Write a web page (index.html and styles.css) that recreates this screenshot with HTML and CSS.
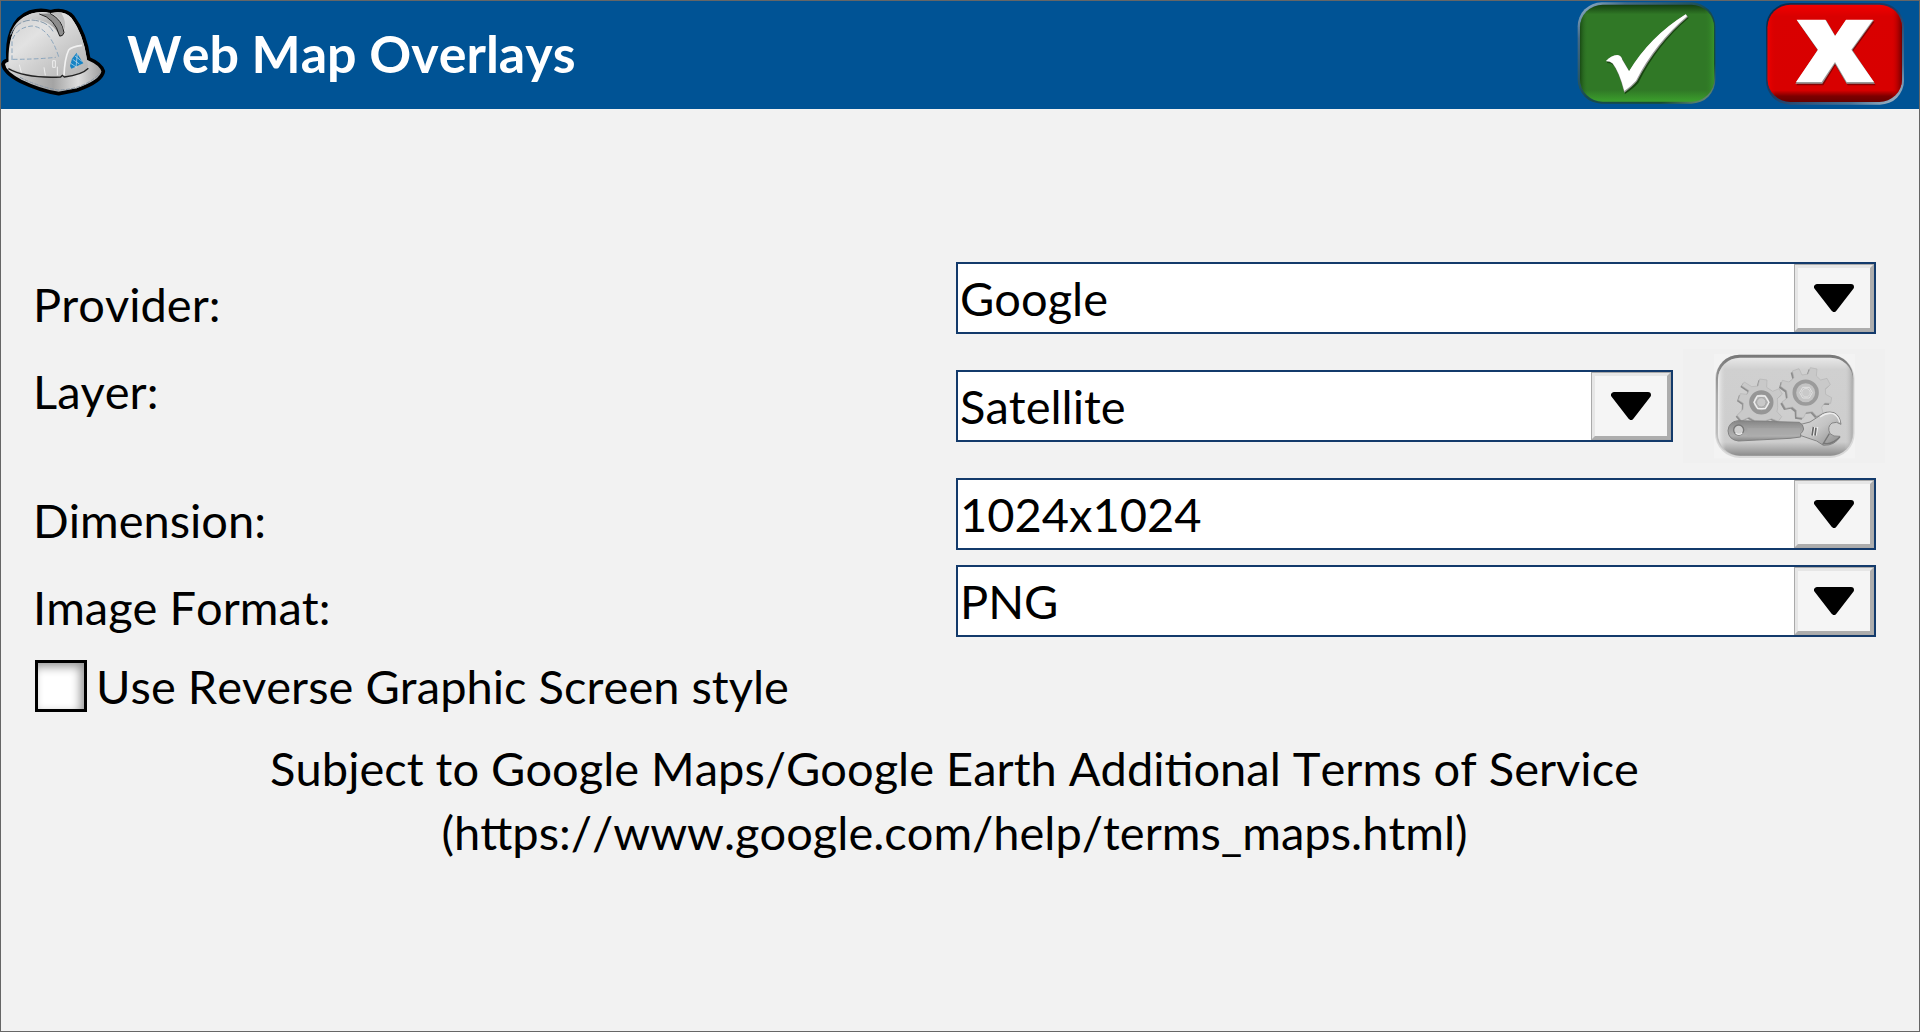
FILE: index.html
```html
<!DOCTYPE html>
<html lang="en">
<head>
<meta charset="utf-8">
<title>Web Map Overlays</title>
<link rel="stylesheet" href="styles.css">
</head>
<body>
<form class="dialog">
  <header class="header">
    <svg class="helmet" viewBox="0 3 360 324" aria-hidden="true">
      <defs>
        <linearGradient id="shell" x1="0" y1="0" x2="1" y2="1">
          <stop offset="0" stop-color="#cfcfcf"/><stop offset=".35" stop-color="#e2e2e2"/><stop offset=".7" stop-color="#c6c6c6"/><stop offset="1" stop-color="#b2b2b2"/>
        </linearGradient>
        <linearGradient id="brim" x1="0" y1="0" x2="1" y2="0">
          <stop offset="0" stop-color="#d8d8d8"/><stop offset=".5" stop-color="#a4a4a4"/><stop offset=".75" stop-color="#dedede"/><stop offset="1" stop-color="#9a9a9a"/>
        </linearGradient>
        <linearGradient id="ridge" x1="0" y1="0" x2="1" y2="1">
          <stop offset="0" stop-color="#e4e4e4"/><stop offset=".6" stop-color="#b5b5b5"/><stop offset="1" stop-color="#555"/>
        </linearGradient>
      </defs>
      <path d="M24 180C20 120 34 56 90 36Q122 26 152 35Q194 24 218 50Q256 100 266 176Q304 192 310 214Q306 244 232 270L176 281Q120 272 62 244Q12 218 9 192Q12 182 24 180Z" fill="url(#brim)" stroke="#000" stroke-width="11" stroke-linejoin="round"/>
      <path d="M27 202C20 125 42 60 94 41Q124 32 152 39Q192 31 214 53Q252 104 264 198Q250 226 190 230Q90 236 27 202Z" fill="url(#shell)"/>
      <path d="M28 112Q46 62 94 56Q160 62 180 110L192 100Q186 58 138 42Q112 35 90 43Q44 58 28 112Z" fill="url(#ridge)"/>
      <path d="M118 42Q164 54 179 108Q188 110 192 98Q188 60 150 40" fill="#8d8d8d" stroke="#222" stroke-width="3"/>
      <path d="M152 39Q186 54 192 90Q202 70 184 38Z" fill="#bdbdbd"/>
      <path d="M32 104Q50 62 96 60Q144 64 160 96" fill="none" stroke="#8498aa" stroke-width="3" stroke-dasharray="22 5"/>
      <path d="M36 180V122Q50 82 96 78Q148 82 176 170M38 178Q110 178 168 172" fill="none" stroke="#8ca6bd" stroke-width="3" stroke-dasharray="14 7"/>
      <path d="M25 206Q78 236 182 231L187 226L193 231Q246 225 265 205" fill="none" stroke="#222" stroke-width="4"/>
      <path d="M60 232Q110 258 172 270Q250 270 300 220" fill="none" stroke="#8a98a6" stroke-width="3" stroke-dasharray="12 4"/>
      <path d="M192 226Q194 176 206 150Q214 140 246 136" fill="none" stroke="#f2f2f2" stroke-width="5"/>
      <path d="M58 194L64 218M132 202L136 226M158 182H166V202H158ZM172 200V226" fill="none" stroke="#eee" stroke-width="3"/>
      <path d="M230 158L250 190L214 206L210 198L216 176Z" fill="#1683c4"/>
      <path d="M218 178L238 192M212 190L230 202M225 168L246 184M232 160L228 203" stroke="#d5e2ec" stroke-width="2"/>
    </svg>
    <h1 class="title">Web Map Overlays</h1>
    <button class="head-button" type="submit" aria-label="Accept">
      <svg viewBox="45 3 426 324" aria-hidden="true">
        <defs>
          <linearGradient id="okEdge" x1="0" y1="0" x2="1" y2="1">
            <stop offset="0" stop-color="#9dbbd2"/><stop offset=".18" stop-color="#446986"/><stop offset=".5" stop-color="#174b52"/><stop offset=".8" stop-color="#194c31"/><stop offset="1" stop-color="#7d9c8a"/>
          </linearGradient>
          <linearGradient id="okBody" x1="0" y1="0" x2="0" y2="1">
            <stop offset="0" stop-color="#143e10"/><stop offset=".1" stop-color="#307826"/><stop offset=".88" stop-color="#307826"/><stop offset="1" stop-color="#3ca02c"/>
          </linearGradient>
          <linearGradient id="okSide" x1="0" y1="0" x2="1" y2="0">
            <stop offset="0" stop-color="#194b14"/><stop offset=".06" stop-color="#307826" stop-opacity="0"/><stop offset=".93" stop-color="#307826" stop-opacity="0"/><stop offset="1" stop-color="#389429"/>
          </linearGradient>
        </defs>
        <rect x="53" y="7" width="413" height="304" rx="72" fill="url(#okEdge)"/>
        <rect x="60" y="14" width="402" height="291" rx="68" fill="url(#okBody)"/>
        <rect x="60" y="14" width="402" height="291" rx="68" fill="url(#okSide)"/>
        <path d="M141 187Q156 170 174 169Q187 171 190 185L210 218Q270 115 379 47L386 54Q290 136 235 249Q222 264 195 282Q180 222 161 196Q152 188 141 189Z" fill="#17450f"/>
        <path d="M138 184Q153 166 172 165Q184 167 188 180L208 214Q270 110 378 43L384 51Q290 130 231 244Q218 260 193 278Q178 218 158 191Q150 184 138 184Z" fill="#999"/>
        <path d="M138 183Q153 166 172 165Q184 167 187 180L207 214Q270 110 377 43L381 49Q285 130 228 242Q215 257 193 273Q178 215 158 190Q150 183 138 183Z" fill="#fff"/>
      </svg>
    </button>
    <button class="head-button" type="button" aria-label="Cancel">
      <svg viewBox="612 3 426 324" aria-hidden="true">
        <defs>
          <linearGradient id="noEdge" x1="0" y1="0" x2="1" y2="1">
            <stop offset="0" stop-color="#08294a"/><stop offset=".5" stop-color="#1e3d66"/><stop offset=".8" stop-color="#4a7194"/><stop offset="1" stop-color="#b5c5d2"/>
          </linearGradient>
          <linearGradient id="noBody" x1="0" y1="0" x2="0" y2="1">
            <stop offset="0" stop-color="#f20000"/><stop offset=".12" stop-color="#d90000"/><stop offset=".88" stop-color="#d80000"/><stop offset=".94" stop-color="#7c0000"/><stop offset="1" stop-color="#600"/>
          </linearGradient>
          <linearGradient id="noSide" x1="0" y1="0" x2="1" y2="0">
            <stop offset="0" stop-color="#f00000"/><stop offset=".06" stop-color="#d80000" stop-opacity="0"/><stop offset=".92" stop-color="#d80000" stop-opacity="0"/><stop offset="1" stop-color="#700000"/>
          </linearGradient>
        </defs>
        <rect x="618" y="9" width="414" height="305" rx="72" fill="url(#noEdge)"/>
        <rect x="623" y="14" width="403" height="292" rx="68" fill="url(#noBody)"/>
        <rect x="623" y="14" width="403" height="292" rx="68" fill="url(#noSide)"/>
        <path d="M714 65H800L828 114L860 65H944L879 154L947 256H863L826 196L790 256H709L775 154Z" fill="#800"/>
        <path d="M710 60H798L826 108L858 60H942L877 150L945 251H860L825 191L787 251H706L773 150Z" fill="#999"/>
        <path d="M710 59H796L825 108L858 59H939L874 149L942 246H860L825 186L785 246H708L774 149Z" fill="#fff"/>
      </svg>
    </button>
  </header>

  <main class="content">
    <div class="fields">
      <label class="label" for="provider">Provider:</label>
      <div class="combo">
        <select class="combo-input" id="provider"><option>Google</option></select>
        <span class="combo-arrow"><svg viewBox="0 0 40 28" aria-hidden="true"><path d="M3 3H37L20 25Z"/></svg></span>
      </div>

      <label class="label" for="layer">Layer:</label>
      <div class="layer">
        <div class="combo layer-combo">
          <select class="combo-input" id="layer"><option>Satellite</option></select>
          <span class="combo-arrow"><svg viewBox="0 0 40 28" aria-hidden="true"><path d="M3 3H37L20 25Z"/></svg></span>
        </div>
        <button class="settings" type="button" aria-label="Layer settings" disabled>
          <svg viewBox="-51 12 606 342" aria-hidden="true">
            <defs>
              <linearGradient id="setEdge" x1="0" y1="0" x2="0" y2="1">
                <stop offset="0" stop-color="#777"/><stop offset=".4" stop-color="#aaa"/><stop offset="1" stop-color="#c8c8c8"/>
              </linearGradient>
              <linearGradient id="setBody" x1="0" y1="0" x2="0" y2="1">
                <stop offset="0" stop-color="#e8e8e8"/><stop offset=".12" stop-color="#d0d0d0"/><stop offset=".86" stop-color="#cdcdcd"/><stop offset="1" stop-color="#8c8c8c"/>
              </linearGradient>
              <linearGradient id="setSide" x1="0" y1="0" x2="1" y2="0">
                <stop offset="0" stop-color="#eee"/><stop offset=".06" stop-color="#d0d0d0" stop-opacity="0"/><stop offset=".94" stop-color="#d0d0d0" stop-opacity="0"/><stop offset="1" stop-color="#aaa"/>
              </linearGradient>
              <linearGradient id="handle" x1="0" y1="0" x2="0" y2="1">
                <stop offset="0" stop-color="#858585"/><stop offset=".3" stop-color="#9b9b9b"/><stop offset=".75" stop-color="#b0b0b0"/><stop offset="1" stop-color="#858585"/>
              </linearGradient>
              <linearGradient id="jaw" x1="0" y1="0" x2="1" y2="1">
                <stop offset="0" stop-color="#dcdcdc"/><stop offset=".5" stop-color="#c4c4c4"/><stop offset="1" stop-color="#888"/>
              </linearGradient>
              <path id="gear" d="M-13 -54L-22 -73L-42 -66L-37 -46L-52 -33L-72 -38L-77 -20L-59 -7L-56 14L-73 27L-62 46L-42 42L-30 52L-29 72L-9 75L0 58L18 56L31 70L50 61L46 43L55 30L73 31L76 14L58 4L57 -12L72 -25L62 -44L43 -39L30 -51L32 -72L12 -76L5 -57Z"/>
              <path id="gearSmall" d="M-9 -50L-4 -71L18 -68L17 -46L35 -34L54 -42L64 -26L49 -12L50 14L48 27L62 42L52 56L32 48L12 54H-18L-36 44L-58 54L-72 38L-54 20L-53 2L-68 -8L-62 -27L-42 -25L-36 -36L-58 -51L-50 -62L-28 -48Z"/>
            </defs>
            <rect x="42" y="27" width="423" height="313" fill="#f3f3f3"/>
            <rect x="45" y="29" width="419" height="310" rx="74" fill="#d9d9d9"/>
            <rect x="48" y="29" width="412" height="304" rx="70" fill="url(#setEdge)"/>
            <rect x="54" y="38" width="404" height="294" rx="66" fill="url(#setBody)"/>
            <rect x="54" y="38" width="404" height="294" rx="66" fill="url(#setSide)"/>
            <use href="#gearSmall" x="179" y="177" fill="#8e8e8e"/>
            <use href="#gearSmall" x="183" y="173" fill="#c9c9c9" stroke="#b4b4b4" stroke-width="2"/>
            <use href="#gear" x="314" y="149" fill="#8c8c8c"/>
            <use href="#gear" x="319" y="144" fill="#c9c9c9" stroke="#b4b4b4" stroke-width="2"/>
            <circle cx="184" cy="172" r="30" fill="#bebebe" stroke="#969696" stroke-width="13"/>
            <path d="M162 172L172 153H195L207 172L196 191H173Z" fill="#b5b5b5" stroke="#efefef" stroke-width="4"/>
            <circle cx="184" cy="172" r="14" fill="#c8c8c8" stroke="#999" stroke-width="2"/>
            <circle cx="317" cy="143" r="34" fill="#c4c4c4" stroke="#9b9b9b" stroke-width="11"/>
            <path d="M299 143L308 127H328L337 143L328 159H308Z" fill="#bdbdbd" stroke="#e2e2e2" stroke-width="3"/>
            <circle cx="318" cy="143" r="13" fill="#c9c9c9" stroke="#e8e8e8" stroke-width="2"/>
            <path d="M295 240L330 231L358 213Q376 196 402 203Q420 211 423 238Q410 228 396 234Q380 245 390 266Q399 276 420 274Q406 302 370 301L350 288L300 271Z" fill="url(#jaw)" stroke="#858585" stroke-width="3" stroke-linejoin="round"/>
            <path d="M388 266L368 299M420 276Q392 302 370 294" stroke="#777" stroke-width="4" fill="none"/>
            <path d="M360 216Q380 201 400 206Q415 214 419 232" stroke="#eee" stroke-width="4" fill="none"/>
            <path d="M336 246H355L350 272H332Z" fill="#eee"/>
            <path d="M340 246L336 272M348 248L345 272" stroke="#666" stroke-width="5"/>
            <path d="M113 227L298 232Q310 238 311 252Q308 262 302 266V276L270 280L115 288Q85 284 84 257Q86 231 113 227Z" fill="url(#handle)" stroke="#828282" stroke-width="3"/>
            <path d="M142 250L300 250V266L142 273Z" fill="#aaa" opacity=".6"/>
            <circle cx="116" cy="255" r="15" fill="#cecece" stroke="#777" stroke-width="4"/>
            <path d="M107 264Q117 273 127 263" stroke="#eee" stroke-width="4" fill="none"/>
          </svg>
        </button>
      </div>

      <label class="label" for="dimension">Dimension:</label>
      <div class="combo">
        <select class="combo-input" id="dimension"><option>1024x1024</option></select>
        <span class="combo-arrow"><svg viewBox="0 0 40 28" aria-hidden="true"><path d="M3 3H37L20 25Z"/></svg></span>
      </div>

      <label class="label" for="format">Image Format:</label>
      <div class="combo">
        <select class="combo-input" id="format"><option>PNG</option></select>
        <span class="combo-arrow"><svg viewBox="0 0 40 28" aria-hidden="true"><path d="M3 3H37L20 25Z"/></svg></span>
      </div>
    </div>

    <div class="check-row">
      <input class="check" type="checkbox" id="reverse">
      <label for="reverse">Use Reverse Graphic Screen style</label>
    </div>

    <p class="terms">Subject to Google Maps/Google Earth Additional Terms of Service<br>(<a class="terms-link" href="https://www.google.com/help/terms_maps.html">https://www.google.com/help/terms_maps.html</a>)</p>
  </main>
</form>
</body>
</html>
```
FILE: styles.css
```css
* {
  box-sizing: border-box;
}

body {
  margin: 0;
  background: #f2f2f2;
  color: #000;
  font-family: Lato, sans-serif;
  font-size: 47px;
  font-kerning: none;
}

.dialog {
  min-height: 100vh;
  border: 1px solid #666;
}

.header {
  display: flex;
  align-items: center;
  height: 108px;
  padding-right: 13px;
  background: #005395;
}

.helmet {
  width: 120px;
  height: 108px;
  margin-left: -1px;
}

.title {
  flex: 1;
  margin: 0 0 4px 7px;
  color: #fff;
  font-size: 52px;
  font-weight: 700;
  line-height: 64px;
}

.head-button {
  width: 142px;
  height: 108px;
  margin-left: 47px;
  padding: 0;
  border: 0;
  background: none;
}

.head-button svg,
.settings svg {
  display: block;
  width: 100%;
  height: 100%;
}

.content {
  padding: 153px 43px 40px 32px;
}

.fields {
  display: grid;
  grid-template-columns: 1fr 1fr;
  gap: 15px 3px;
  align-items: start;
}

.label {
  padding-top: 12px;
  line-height: 60px;
}

.combo {
  display: grid;
  height: 72px;
  border: 2px solid #133a6b;
  background: #fff;
}

.combo-input,
.combo-arrow {
  grid-area: 1 / 1;
}

.combo-input {
  appearance: none;
  width: 100%;
  padding: 0 84px 0 2px;
  border: 0;
  background: none;
  color: inherit;
  font: inherit;
  font-kerning: none;
}

.combo-arrow {
  display: flex;
  align-items: center;
  justify-content: center;
  justify-self: end;
  width: 80px;
  border: 4px solid;
  border-color: #e6e6e6 #adadad #adadad #e6e6e6;
  outline: 1px solid #aaa;
  outline-offset: -1px;
  background: #f5f5f5;
  pointer-events: none;
}

.combo-arrow svg {
  width: 40px;
  height: 28px;
  stroke: #000;
  stroke-width: 6px;
  stroke-linejoin: round;
}

.layer {
  display: flex;
  gap: 10px;
  margin-right: -9px;
}

.layer-combo {
  flex: 1;
  margin-top: 21px;
}

.settings {
  width: 202px;
  height: 114px;
  padding: 0;
  border: 0;
  background: #f0f0f0;
}

.check-row {
  display: flex;
  align-items: center;
  gap: 9px;
  margin: 23px 0 0 2px;
  line-height: 52px;
}

.check {
  appearance: none;
  width: 52px;
  height: 52px;
  margin: 0;
  border: 3px solid #000;
  background: #fff;
  box-shadow: inset -4px 4px 10px #999;
}

.terms {
  margin: 24px 0 0;
  line-height: 64px;
  text-align: center;
}

.terms-link {
  color: inherit;
  text-decoration: none;
}
```
